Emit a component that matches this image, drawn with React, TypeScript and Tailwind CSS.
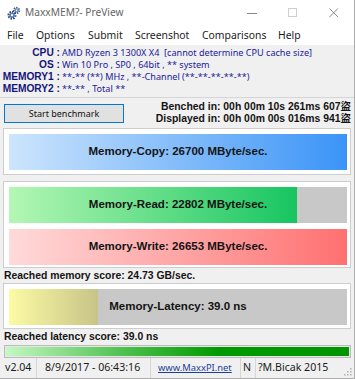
import React from 'react';

// MaxxMEM² preview window, Win10 look

const BARS_A = [{ label: 'Memory-Copy: 26700 MByte/sec.', pct: 100, grad: 'bg-[linear-gradient(to_right,#cde5fd,#3a94f7)]' }];

function Gears() {
    return (
        <svg width="14" height="14" viewBox="0 0 14 14" className="ml-[7px]">
            <circle cx="9.6" cy="4.4" r="2.6" fill="none" stroke="#3c5686" strokeWidth="2" strokeDasharray="1.3 1" />
            <circle cx="9.6" cy="4.4" r="2" fill="#6b8cc0" />
            <circle cx="9.6" cy="4.4" r="0.8" fill="#fff" />
            <circle cx="5" cy="9.2" r="3.4" fill="none" stroke="#2f4877" strokeWidth="2.2" strokeDasharray="1.5 1.1" />
            <circle cx="5" cy="9.2" r="2.7" fill="#5a7cb4" />
            <circle cx="5" cy="9.2" r="1.1" fill="#fff" />
        </svg>
    );
}

function WinControls() {
    return (
        <div className="ml-auto flex h-full">
            <div className="w-[41px] flex items-center justify-center">
                <svg width="10" height="10" viewBox="0 0 10 10"><path d="M0 5.5 H10" stroke="#8a8a8a" strokeWidth="1" /></svg>
            </div>
            <div className="w-[41px] flex items-center justify-center">
                <svg width="10" height="10" viewBox="0 0 10 10"><rect x="0.5" y="0.5" width="8" height="8" fill="none" stroke="#cfcfcf" strokeWidth="1" /></svg>
            </div>
            <div className="w-[41px] flex items-center justify-center">
                <svg width="10" height="10" viewBox="0 0 10 10"><path d="M0.5 0.5 L9 9 M9 0.5 L0.5 9" stroke="#8a8a8a" strokeWidth="1" /></svg>
            </div>
        </div>
    );
}

const MENU = [
    { t: 'File', w: 'w-[29px]' },
    { t: 'Options', w: 'w-[52px]' },
    { t: 'Submit', w: 'w-[47px]' },
    { t: 'Screenshot', w: 'w-[67px]' },
    { t: 'Comparisons', w: 'w-[76px]' },
    { t: 'Help', w: 'w-[30px]' },
];

const INFO = [
    ['CPU :', 'AMD Ryzen 3 1300X X4  [cannot determine CPU cache size]'],
    ['OS :', 'Win 10 Pro , SP0 , 64bit , ** system'],
    ['MEMORY1 :', '**-** (**) MHz , **-Channel (**-**-**-**-**)'],
    ['MEMORY2 :', '**-** , Total **'],
];

function Bar({ label, pct, grad }: { label: string; pct: number; grad: string }) {
    return (
        <div className="grid h-[36px] bg-[#c8c8c8]">
            <div className={`col-start-1 row-start-1 h-full ${grad}`} style={{ width: pct + '%' }} />
            <div className="col-start-1 row-start-1 flex items-center justify-center font-['Liberation_Sans',Arial,sans-serif] font-bold text-[11.5px] text-[#141414]">
                {label}
            </div>
        </div>
    );
}

export default function App() {
    return (
        <div className="w-[355px] h-[379px] flex flex-col overflow-hidden bg-[#f0f0f0] border-r border-b border-[#acacac]">
            {/* title bar */}
            <div className="h-[26px] shrink-0 bg-white flex items-center">
                <Gears />
                <span className="ml-[4px] font-['Noto_Sans',sans-serif] text-[10.2px] text-[#666]">MaxxMEM?- PreView</span>
                <WinControls />
            </div>

            {/* menu */}
            <div className="h-[19px] shrink-0 bg-white flex items-center pl-[7px] font-['Noto_Sans',sans-serif] text-[10.4px] text-[#1b1b1b]">
                {MENU.map((m) => (
                    <span key={m.t} className={m.w}>{m.t}</span>
                ))}
            </div>

            {/* system info */}
            <div className="h-[53px] shrink-0 pt-[2px] border-b border-[#d6d6d6]">
                {INFO.map(([k, v]) => (
                    <div key={k} className="flex items-center h-[12px]">
                        <span className="w-[60px] text-right font-['Liberation_Sans',Arial,sans-serif] font-bold text-[10.2px] text-[#16167a]">{k}</span>
                        <span className="ml-[2px] font-['Noto_Sans',sans-serif] text-[9.1px] text-[#20209a] whitespace-pre">{v}</span>
                    </div>
                ))}
            </div>

            {/* start row */}
            <div className="h-[30px] shrink-0 flex items-start">
                <button className="mt-[6px] ml-[4px] w-[120px] h-[19px] border border-[#0078d7] bg-[#e1e1e1] font-['Noto_Sans',sans-serif] text-[9px] text-[#111] flex items-center justify-center">
                    Start benchmark
                </button>
                <div className="ml-auto pr-[3px] pt-[3px] text-right font-['Liberation_Sans','Noto_Sans_CJK_SC',sans-serif] font-bold text-[10.4px] leading-[12px] text-[#141414] whitespace-nowrap">
                    <div>Benched in: 00h 00m 10s 261ms 607盜</div>
                    <div>Displayed in: 00h 00m 00s 016ms 941盜</div>
                </div>
            </div>

            {/* copy */}
            <div className="h-[47px] shrink-0 mx-[3px] border border-[#cdcdcd] bg-white pt-[5px] pl-[5px] pr-[3px]">
                {BARS_A.map((b) => (
                    <Bar key={b.label} label={b.label} pct={b.pct} grad={b.grad} />
                ))}
            </div>

            {/* read / write */}
            <div className="h-[87px] shrink-0 mt-[6px] mx-[3px] border border-[#cdcdcd] bg-white pt-[5px] pl-[5px] pr-[3px] flex flex-col gap-[6px]">
                <Bar label="Memory-Read: 22802 MByte/sec." pct={85.1} grad="bg-[linear-gradient(to_right,#b4f7b4,#17c560)]" />
                <Bar label="Memory-Write: 26653 MByte/sec." pct={100} grad="bg-[linear-gradient(to_right,#ffdada,#ff7070)]" />
            </div>

            <div className="h-[15px] shrink-0 pl-[4px] flex items-center font-['Liberation_Sans',Arial,sans-serif] font-bold text-[10.4px] text-[#141414]">
                Reached memory score: 24.73 GB/sec.
            </div>

            {/* latency */}
            <div className="h-[46px] shrink-0 mx-[3px] border border-[#cdcdcd] bg-white pt-[5px] pl-[5px] pr-[3px]">
                <Bar label="Memory-Latency: 39.0 ns" pct={26.3} grad="bg-[linear-gradient(to_right,#fbfba4,#c8c488)]" />
            </div>

            <div className="h-[16px] shrink-0 pl-[4px] flex items-center font-['Liberation_Sans',Arial,sans-serif] font-bold text-[10.4px] text-[#141414]">
                Reached latency score: 39.0 ns
            </div>

            {/* progress */}
            <div className="h-[13px] shrink-0 ml-[4px] mr-[3px] border border-[#bcbcbc] bg-[#e6e6e6] p-[1px]">
                <div className="h-full bg-[linear-gradient(to_right,#c4f8c4,#4cbf4c_35%,#009a00_62%,#009400)]" />
            </div>

            {/* status bar */}
            <div className="h-[20px] shrink-0 flex items-stretch font-['Noto_Sans',sans-serif] text-[10.6px] text-[#1b1b1b]">
                <div className="w-[37px] pl-[5px] flex items-center border-r border-[#d7d7d7]">v2.04</div>
                <div className="w-[114px] pl-[8px] flex items-center border-r border-[#d7d7d7]">8/9/2017 - 06:43:16</div>
                <div className="w-[90px] pl-[7px] flex items-center border-r border-[#d7d7d7]">
                    <span className="underline text-[#1c3f9e] text-[9.4px]">www.MaxxPI.net</span>
                </div>
                <div className="w-[15px] pl-[2px] flex items-center border-r border-[#d7d7d7]">N</div>
                <div className="pl-[2px] flex items-center">?M.Bicak 2015</div>
                <div className="ml-auto flex items-end pb-[2px] pr-[2px]">
                    <svg width="8" height="8" viewBox="0 0 8 8" fill="#b0b0b0">
                        <rect x="6" y="0" width="1.5" height="1.5" />
                        <rect x="3" y="3" width="1.5" height="1.5" />
                        <rect x="6" y="3" width="1.5" height="1.5" />
                        <rect x="0" y="6" width="1.5" height="1.5" />
                        <rect x="3" y="6" width="1.5" height="1.5" />
                        <rect x="6" y="6" width="1.5" height="1.5" />
                    </svg>
                </div>
            </div>
        </div>
    );
}
